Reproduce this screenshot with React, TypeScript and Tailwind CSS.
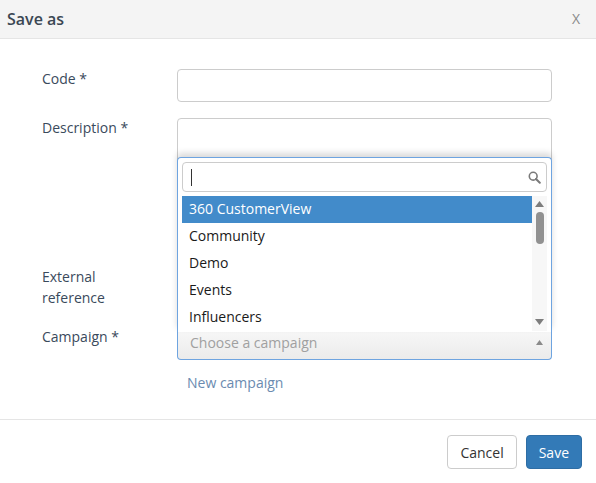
import React from "react";

const items = ["360 CustomerView", "Community", "Demo", "Events", "Influencers"];

export default function App() {
  return (
    <div
      className="w-[596px] h-[483px] bg-white relative overflow-hidden text-[14px]"
      style={{ fontFamily: '"Open Sans", sans-serif' }}
    >
      {/* Header */}
      <div className="h-[39px] bg-[#f4f4f4] border-b border-[#e5e5e5] flex items-center justify-between pl-[7px] pr-[16px]">
        <span className="text-[16px] font-semibold text-[#3b4753] leading-none">Save as</span>
        <span className="text-[14px] text-[#8a8a8a] leading-none">X</span>
      </div>

      {/* Body */}
      <div className="h-[380px] pl-[42px] pr-[44px] pt-[30px] text-[#3a4a5c]">
        <div className="flex">
          <div className="w-[135px] leading-[20px]">Code *</div>
          <div className="flex-1 h-[33px] border border-[#cccccc] rounded-[4px]" />
        </div>
        <div className="flex mt-[16px]">
          <div className="w-[135px] leading-[20px]">Description *</div>
          <div className="flex-1 h-[132px] border border-[#cccccc] rounded-[4px]" />
        </div>
        <div className="flex mt-[16px]">
          <div className="w-[135px] leading-[21px]">
            External
            <br />
            reference
          </div>
          <div className="flex-1 h-[33px] border border-[#cccccc] rounded-[4px]" />
        </div>
        <div className="flex mt-[23px]">
          <div className="w-[135px] leading-[20px] -mt-[4px]">Campaign *</div>
          <div className="flex-1 relative">
            {/* dropdown (drop-up) */}
            <div className="absolute left-0 right-0 bottom-[28px] h-[175px] bg-white border border-b-0 border-[#6ea4e0] rounded-t-[4px] shadow-[0_-4px_6px_rgba(0,0,0,0.15)] px-[4px] pt-[4px]">
              <div className="h-[30px] border border-[#cccccc] rounded-[4px] flex items-center px-[8px] justify-between">
                <span className="w-[1px] h-[17px] bg-[#333]" />
                <svg width="13" height="13" viewBox="0 0 13 13" className="mr-[-3px]">
                  <circle cx="5.2" cy="5.2" r="3.9" fill="none" stroke="#7a7a7a" strokeWidth="1.6" />
                  <line x1="8" y1="8" x2="11.8" y2="11.8" stroke="#7a7a7a" strokeWidth="2" strokeLinecap="round" />
                </svg>
              </div>
              <div className="flex mt-[4px]">
                <div className="flex-1">
                  {items.map((it, i) => (
                    <div
                      key={it}
                      className={
                        "h-[27px] leading-[25px] pl-[7px] text-[14px] " +
                        (i === 0 ? "bg-[#428bca] text-white" : "text-[#1a1a1a]")
                      }
                    >
                      {it}
                    </div>
                  ))}
                </div>
                <div className="w-[15px] h-[135px] bg-[#f7f7f7] flex flex-col items-center relative">
                  <svg width="9" height="6" viewBox="0 0 9 6" className="mt-[5px]">
                    <polygon points="4.5,0 9,6 0,6" fill="#7d7d7d" />
                  </svg>
                  <div className="w-[8px] h-[32px] bg-[#919191] rounded-[4px] mt-[5px]" />
                  <svg width="9" height="6" viewBox="0 0 9 6" className="absolute bottom-[6px]">
                    <polygon points="0,0 9,0 4.5,6" fill="#7d7d7d" />
                  </svg>
                </div>
              </div>
            </div>
            {/* select box */}
            <div className="h-[29px] border border-t-0 border-[#6ea4e0] rounded-b-[4px] bg-[linear-gradient(#f7f7f7,#ebebeb)] flex items-center justify-between pl-[12px] pr-[8px] pb-[5px]">
              <span className="text-[#a0a0a0] leading-[20px]">Choose a campaign</span>
              <svg width="7" height="5" viewBox="0 0 7 5">
                <polygon points="3.5,0 7,5 0,5" fill="#8a8a8a" />
              </svg>
            </div>
          </div>
        </div>
        <div className="flex mt-[13px]">
          <div className="w-[145px]" />
          <span className="text-[#6b8bb0] leading-[20px]">New campaign</span>
        </div>
      </div>

      {/* Footer */}
      <div className="h-[64px] border-t border-[#e5e5e5] flex items-start justify-end pt-[15px] pr-[14px] gap-[9px]">
        <button className="h-[34px] px-[12px] border border-[#cccccc] rounded-[4px] bg-white text-[#333]">
          Cancel
        </button>
        <button className="h-[34px] px-[12px] border border-[#2e6da4] rounded-[4px] bg-[#337ab7] text-white">
          Save
        </button>
      </div>
    </div>
  );
}
